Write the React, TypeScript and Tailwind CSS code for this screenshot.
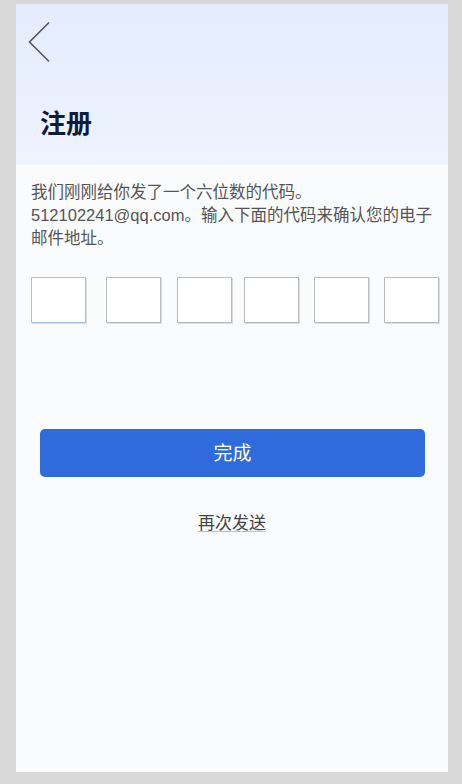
import React from "react";

export default function App() {
  const font = { fontFamily: '"Liberation Sans", "Noto Sans CJK SC", sans-serif' };
  const gaps = ["ml-0", "ml-[20px]", "ml-[16px]", "ml-[12px]", "ml-[15px]", "ml-[15px]"];
  return (
    <div className="min-h-[784px] bg-[#d8d8d8] pl-4 pr-[14px] pt-1 pb-3" style={font}>
      <div className="h-[768px] bg-[#f9fbfd] flex flex-col">
        <div className="h-[161px] bg-gradient-to-b from-[#e4ecfd] to-[#eef3fd] flex flex-col">
          <div className="pl-[12px] pt-[17px]">
            <svg width="24" height="42" viewBox="0 0 24 42" fill="none">
              <polyline points="21,1.5 1.5,21 21,40.5" stroke="#555" strokeWidth="1.6" />
            </svg>
          </div>
          <div className="pl-6 mt-[45px] text-[26px] leading-8 font-bold text-[#0e1b3a]">注册</div>
        </div>
        <div className="pl-[15px] pr-[8px] pt-[16px] text-[16.5px] leading-[23px] text-[#555]">
          我们刚刚给你发了一个六位数的代码。512102241@qq.com。输入下面的代码来确认您的电子邮件地址。
        </div>
        <div className="flex pl-[15px] mt-[27px]">
          {gaps.map((g, i) => (
            <div
              key={i}
              className={`${g} w-[55px] h-[46px] bg-white border ${
                i === 0 ? "border-[#a9c3e8]" : "border-[#bdbdbd]"
              } shadow-[1px_1px_0_#dcdcdc]`}
            />
          ))}
        </div>
        <div className="mt-[106px] ml-6 mr-[23px]">
          <button className="w-full h-12 rounded-[5px] bg-[#2f6bdb] text-white text-[19px] pt-[3px]">完成</button>
        </div>
        <div className="mt-[35px] text-center text-[17px] leading-6 text-[#444]">
          <span className="underline decoration-[#c4c4c4] underline-offset-[2px]">再次发送</span>
        </div>
      </div>
    </div>
  );
}
